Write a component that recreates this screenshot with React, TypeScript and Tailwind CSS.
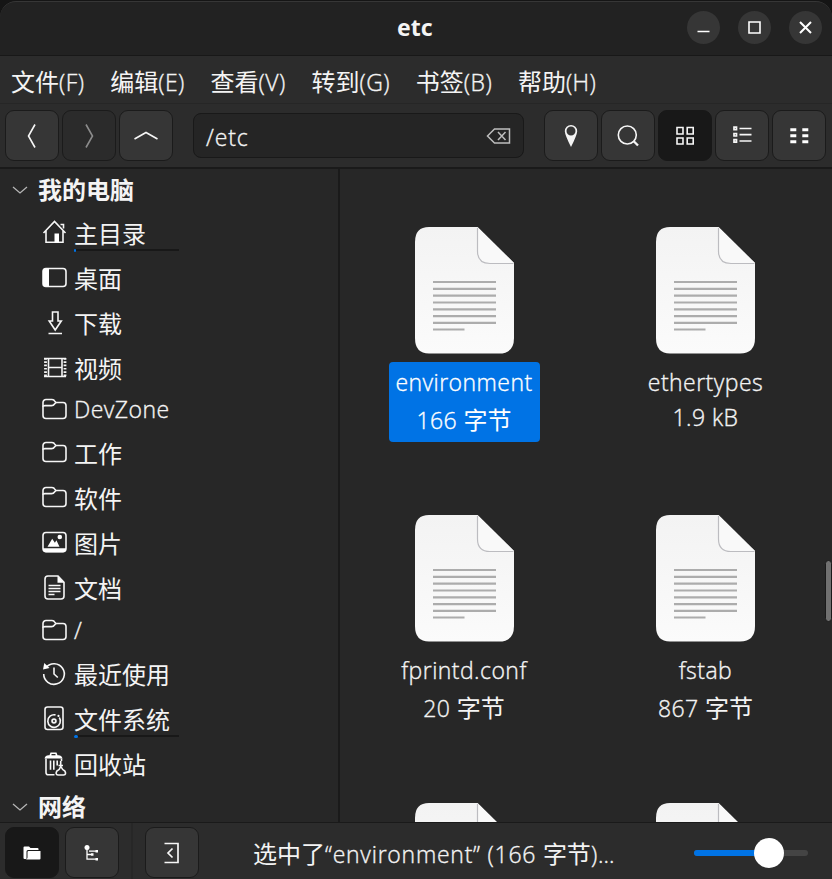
import React from "react";

/* Latin runs are set slightly smaller and lighter than the Chinese runs beside them. */
function Label({
  text,
  className = "",
  latin = "tracking-[0.45px]",
}: {
  text: string;
  className?: string;
  latin?: string;
}) {
  const parts = text.split(/([\u4e00-\u9fff]+)/).filter(Boolean);
  return (
    <span className={`whitespace-pre text-[23px] ${className}`}>
      {parts.map((p, i) =>
        /[\u4e00-\u9fff]/.test(p) ? (
          <span key={i} className="text-[24px]">
            {p}
          </span>
        ) : (
          <span
            key={i}
            className={`font-['Open_Sans','Noto_Sans',sans-serif] font-light [-webkit-text-stroke:0.35px_currentColor] ${latin}`}
          >
            {p}
          </span>
        )
      )}
    </span>
  );
}

const stroke = { fill: "none", stroke: "#f6f6f6", strokeWidth: 1.6 } as const;

function Svg({ w = 26, h = 26, children }: { w?: number; h?: number; children: React.ReactNode }) {
  return (
    <svg width={w} height={h} viewBox={`0 0 ${w} ${h}`} className="block shrink-0">
      {children}
    </svg>
  );
}

const HomeIcon = () => (
  <Svg>
    <g {...stroke}>
      <path d="M1.500 13 12.500 1.500l11 11.500M4 10.500v11.700h17V10.500" />
      <path d="M18.500 4.500h3v4" />
    </g>
    <path d="M12.500 13.500h4.500v9h-4.500z" fill="#fff" />
  </Svg>
);
const DesktopIcon = () => (
  <Svg>
    <rect x="1" y="3.500" width="23" height="18" rx="3" {...stroke} />
    <path d="M3.500 3.500H7v18H3.500A2.500 2.500 0 0 1 1 19V6a2.500 2.500 0 0 1 2.500-2.500z" fill="#fff" />
  </Svg>
);
const DownloadIcon = () => (
  <Svg>
    <path d="M10.500 2h5.500v9h3.300L13.200 20 7.200 11h3.300zM6.500 23.500H20" {...stroke} />
  </Svg>
);
const VideoIcon = () => (
  <Svg>
    <g {...stroke}>
      <path d="M2 3.500h22M2 21.500h22M6.500 3v19M20 3v19M6.500 12.500H20" />
      <path d="M3.500 3v19M23 3v19" strokeWidth="2.800" strokeDasharray="1.700 1.600" />
    </g>
  </Svg>
);
const FolderIcon = () => (
  <Svg>
    <g {...stroke}>
      <path d="M1 5.500a3 3 0 0 1 3-3h6q2 0 3 2l1 1h7a3 3 0 0 1 3 3v10a3 3 0 0 1-3 3H4a3 3 0 0 1-3-3z" />
      <path d="M1 9.800q0-1.200 2-1.200h6.500q2 0 3-1.600L14 5.500" />
    </g>
  </Svg>
);
const PictureIcon = () => (
  <Svg>
    <rect x="1" y="2.500" width="23" height="19" rx="3" {...stroke} />
    <path d="M1 18.200h23v1.200a3 3 0 0 1-3 3H4a3 3 0 0 1-3-3z" fill="#fff" />
    <path d="m5.500 16.700 4.700-8 2.700 4 1.500-2.500 3.100 6.500z" fill="#fff" />
    <circle cx="17.800" cy="7" r="2.300" fill="#fff" />
  </Svg>
);
const DocumentIcon = () => (
  <Svg>
    <path d="M6 1h10l6 6.200v13.800a3 3 0 0 1-3 3H6a3 3 0 0 1-3-3V4a3 3 0 0 1 3-3z" {...stroke} />
    <path d="M15.500 1v6.800h6.700z" fill="#fff" />
    <path d="M6.500 10.500h12M6.500 13.500h12M6.500 16.500h12M6.500 19.500h6" {...stroke} strokeWidth={1.500} />
  </Svg>
);
const RecentIcon = () => (
  <Svg>
    <path d="M4 6.500A10.300 10.300 0 1 1 1.700 13M12 6.500V13l3.800 3.500" {...stroke} />
    <path d="m1 8.500 1.300-6.500L7.500 7z" fill="#fff" />
  </Svg>
);
const DiskIcon = () => (
  <Svg>
    <g {...stroke}>
      <rect x="3" y="1" width="18" height="22.500" rx="2.500" />
      <path d="M13.500 8.900A6.300 6.300 0 1 0 17.300 11.500" />
      <circle cx="12" cy="15" r="1.900" strokeWidth="1.800" />
    </g>
    <circle cx="16.500" cy="9.900" r="1.100" fill="#fff" />
  </Svg>
);
const TrashIcon = () => (
  <Svg>
    <path d="M2.500 7.500q1-3.300 4-3.300h1l1-2.700h6l1 2.700h1q3 0 4 3.300z" fill="#fff" />
    <path d="M9.500 3h4v1.300h-4z" fill="#272727" />
    <g {...stroke}>
      <path d="M4 7.500v14a2.300 2.300 0 0 0 2.300 2.300h6.200M19.500 7.500v2.500M8.500 9.500v9.300M11.800 9.500v9.300M15.200 9.500v5M18.700 10v4" />
      <path d="M16.500 14.500h4.500M18.800 15.500q1.500 3.200 4 4.500 2 3.500-1.200 4h-5.500q-3.200-.5-1.200-4 2.800-1.300 3.900-4.500z" />
    </g>
  </Svg>
);

const places = [
  { name: "主目录", icon: HomeIcon, h: "h-[45px]", used: "w-[2px]" },
  { name: "桌面", icon: DesktopIcon, h: "h-[45px]" },
  { name: "下载", icon: DownloadIcon, h: "h-[45px]" },
  { name: "视频", icon: VideoIcon, h: "h-[45px]" },
  { name: "DevZone", icon: FolderIcon, h: "h-[40px]", latin: true },
  { name: "工作", icon: FolderIcon, h: "h-[45px]" },
  { name: "软件", icon: FolderIcon, h: "h-[45px]" },
  { name: "图片", icon: PictureIcon, h: "h-[45px]" },
  { name: "文档", icon: DocumentIcon, h: "h-[45px]" },
  { name: "/", icon: FolderIcon, h: "h-[41px]", latin: true },
  { name: "最近使用", icon: RecentIcon, h: "h-[45px]" },
  { name: "文件系统", icon: DiskIcon, h: "h-[45px]", used: "w-[4px]" },
  { name: "回收站", icon: TrashIcon, h: "h-[45px]" },
];

function SectionHeader({ name, h }: { name: string; h: string }) {
  return (
    <div className={`flex shrink-0 items-center pl-[12px] ${h}`}>
      <Svg w={16} h={10}>
        <path d="m1 2 7 6 7-6" fill="none" stroke="#b5b5b5" strokeWidth="1.300" />
      </Svg>
      <Label text={name} className="ml-[10px] font-bold leading-[36px]" />
    </div>
  );
}

function FileSheet() {
  return (
    <svg width="101" height="127" viewBox="0 0 101 127" className="block shrink-0">
      <defs>
        <linearGradient id="sheet" x1="0" y1="0" x2="0" y2="1">
          <stop offset="0" stopColor="#f3f3f3" />
          <stop offset="1" stopColor="#fbfbfb" />
        </linearGradient>
      </defs>
      <path d="M15 0h48.500L100 36v75q0 15.500-15 15.500H15Q1 126.500 1 111V15Q1 0 15 0z" fill="url(#sheet)" />
      <path d="M63.500 0 100 36H76Q63.500 36 63.500 23z" fill="#f9f9f9" />
      <path d="M63.500 1v23q0 12.500 12.500 12.500h23.500" fill="none" stroke="#bcbcc0" strokeWidth="1.200" />
      <path
        d="M19 55h63M19 61.900h63M19 68.700h63M19 75.500h63M19 82.300h63M19 89.100h63M19 95.900h63M19 102.500h31.500"
        stroke="#acacac"
        strokeWidth="2.200"
      />
    </svg>
  );
}

const files = [
  { name: "environment", size: "166 字节", selected: true },
  { name: "ethertypes", size: "1.9 kB" },
  { name: "fprintd.conf", size: "20 字节" },
  { name: "fstab", size: "867 字节" },
  { name: "", size: "" },
  { name: "", size: "" },
];

function ToolButton({ tone = "normal", children }: { tone?: "normal" | "active" | "disabled"; children: React.ReactNode }) {
  const tones = {
    normal: "bg-[#363636] border-[#1b1b1b]",
    active: "bg-[#181818] border-[#181818]",
    disabled: "bg-[#2b2b2b] border-[#1b1b1b]",
  };
  return (
    <button className={`flex h-[51px] w-[54px] shrink-0 items-center justify-center rounded-[9px] border pr-px ${tones[tone]}`}>
      {children}
    </button>
  );
}

function Round({ children }: { children: React.ReactNode }) {
  return (
    <button className="flex h-[33px] w-[33px] items-center justify-center rounded-full bg-[#363636]">
      <svg width="33" height="33" viewBox="0 0 33 33" fill="none" stroke="#fff" strokeWidth="1.600">
        {children}
      </svg>
    </button>
  );
}

export default function App() {
  return (
    <div className="h-[879px] w-[832px] overflow-hidden bg-[#151515] pt-px font-['Noto_Sans','Noto_Sans_CJK_SC',sans-serif] text-[#f4f4f4]">
      <div className="flex h-full flex-col overflow-hidden rounded-t-[16px] bg-[#272727]">
        <header className="flex h-[55px] shrink-0 items-center rounded-t-[16px] border-b border-t border-b-[#181818] border-t-[#363636] bg-[#222222]">
          <div className="w-[143px]" />
          <div className="flex-1 pb-[4px] text-center text-[23px] font-bold leading-[32px]">etc</div>
          <div className="flex w-[145.500px] gap-[18px] pb-[2px]">
            <Round>
              <path d="M10.500 20.500h12" />
            </Round>
            <Round>
              <path d="M11 11h11v11H11z" />
            </Round>
            <Round>
              <path d="m11 11 11 11M22 11 11 22" strokeWidth="2" />
            </Round>
          </div>
        </header>

        <nav className="flex h-[48px] shrink-0 items-center gap-[25.800px] border-b border-[#262626] bg-[#2c2c2c] pl-[11px] pt-[4px]">
          {["文件(F)", "编辑(E)", "查看(V)", "转到(G)", "书签(B)", "帮助(H)"].map((m) => (
            <Label key={m} text={m} className="leading-[36px]" />
          ))}
        </nav>

        <div className="flex h-[65px] shrink-0 items-center gap-[3px] border-b-2 border-[#1a1a1a] bg-[#2c2c2c] pl-[5px]">
          <ToolButton>
            <Svg w={12} h={26}>
              <path d="M9 1.500 2.500 13 9 24.500" {...stroke} />
            </Svg>
          </ToolButton>
          <ToolButton tone="disabled">
            <Svg w={12} h={26}>
              <path d="M3 1.500 9.500 13 3 24.500" {...stroke} stroke="#8b8b8b" />
            </Svg>
          </ToolButton>
          <ToolButton>
            <Svg w={26} h={12}>
              <path d="M1.500 9 13 2.500 24.500 9" {...stroke} />
            </Svg>
          </ToolButton>
          <div className="mx-[17px] flex h-[45px] w-[331px] shrink-0 items-center justify-between rounded-[8px] border border-[#191919] bg-[#252525] pl-[12px] pr-[11px]">
            <Label text="/etc" className="pt-[3px] leading-[32px]" latin="tracking-[0.9px]" />
            <Svg w={26} h={18}>
              <path d="M8.500 2h15v14h-15L1.500 9zM12 5l7.500 8M19.500 5 12 13" fill="none" stroke="#bdbdbd" strokeWidth="1.500" />
            </Svg>
          </div>
          <ToolButton>
            <Svg w={16} h={26}>
              <path fillRule="evenodd" fill="#f4f4f4" d="M8 2a6.200 6.200 0 0 1 6.200 6.200Q14 12 8 24 2 12 1.800 8.200A6.200 6.200 0 0 1 8 2zm0 1.500A4.500 4.500 0 1 0 8 12.500 4.500 4.500 0 0 0 8 3.500z" />
            </Svg>
          </ToolButton>
          <ToolButton>
            <Svg>
              <circle cx="12.300" cy="12" r="9" {...stroke} />
              <path d="m18.500 18 4.500 4.500" stroke="#f4f4f4" strokeWidth="2.300" />
            </Svg>
          </ToolButton>
          <ToolButton tone="active">
            <Svg>
              <path d="M5 4.500h6v6.500H5zM15.200 4.500h6v6.500h-6zM5 15h6v6H5zM15.200 15h6v6h-6z" {...stroke} />
            </Svg>
          </ToolButton>
          <ToolButton>
            <Svg>
              <path d="M5 4.200h2.500v2.500H5zM5 10.500h2.500V13H5zM5 16.700h2.500v2.500H5zM10.500 5.500h12M10.500 11.700h12M10.500 18h12" {...stroke} strokeWidth={1.700} />
            </Svg>
          </ToolButton>
          <ToolButton>
            <Svg>
              <path d="M4.300 6.800h6M16.300 6.800h6M4.300 12.800h6M16.300 12.800h6M4.300 18.800h6M16.300 18.800h6" stroke="#fff" strokeWidth="2.900" />
            </Svg>
          </ToolButton>
        </div>

        <div className="flex h-[653px] shrink-0 overflow-hidden">
          <aside className="flex w-[340px] shrink-0 flex-col overflow-hidden border-r-2 border-[#1a1a1a]">
            <SectionHeader name="我的电脑" h="h-[41px]" />
            {places.map((p) => (
              <div key={p.name} className={`relative flex shrink-0 items-center pl-[42px] ${p.h}`}>
                <p.icon />
                <Label text={p.name} className={`ml-[6px] leading-[36px] ${p.latin ? "pb-[2px]" : "pt-[2px]"}`} />
                {p.used && (
                  <div className="absolute bottom-[4px] left-[74px] h-[2px] w-[105px] bg-[#181818]">
                    <div className={`h-[3px] rounded-full bg-[#0073e5] ${p.used}`} />
                  </div>
                )}
              </div>
            ))}
            <SectionHeader name="网络" h="h-[42px]" />
          </aside>

          <main className="relative flex-1 overflow-hidden pl-[3px] pt-[58px]">
            <div className="grid grid-cols-[242px_241px]">
              {files.map((f, i) => (
                <div key={i} className="flex h-[288px] flex-col items-center">
                  <FileSheet />
                  {f.name && (
                    <div
                      className={`mt-[8px] flex h-[80px] flex-col items-center rounded-[4px] px-[6px] pt-[2px] ${
                        f.selected ? "w-[151px] bg-[#0073e5] text-white" : ""
                      }`}
                    >
                      <Label text={f.name} className="leading-[36px]" />
                      <Label text={f.size} className={f.size.includes("kB") ? "leading-[34px]" : "leading-[40px]"} />
                    </div>
                  )}
                </div>
              ))}
            </div>
            <div className="absolute right-0 top-[391px] h-[62px] w-[7px] rounded-full border border-[#1a1a1a] bg-[#707070]" />
          </main>
        </div>

        <footer className="flex h-[57px] shrink-0 items-start border-t border-[#1a1a1a] bg-[#2c2c2c] pl-[5px] pt-[4px]">
          <ToolButton tone="active">
            <Svg w={20} h={18}>
              <path d="M1.500 3.500q0-1 1-1H7L8.500 4h7q1 0 1 1v1H6q-1.500 0-1.500 1.500V15h-2q-1 0-1-1z" fill="#fff" />
              <path d="M5.500 8q0-1 1-1h12v7.500q0 1-1 1h-14q2 0 2-2z" fill="#fff" />
            </Svg>
          </ToolButton>
          <div className="w-[6px]" />
          <ToolButton>
            <Svg w={18} h={18}>
              <circle cx="4" cy="3.500" r="2.500" fill="#fff" />
              <path d="M4 4v11.200h9M4 10.500h4M6 7.200h7" fill="none" stroke="#fff" strokeWidth="1.300" />
              <path d="M12.500 6h2.500v2.500h-2.500zM8 9.300h2.500v2.500H8zM12.500 13.900h2.500v2.500h-2.500z" fill="#fff" />
            </Svg>
          </ToolButton>
          <div className="ml-[12px] mr-[12px] mt-[-4px] h-[56px] w-[2px] bg-[#272727]" />
          <ToolButton>
            <Svg w={18} h={22}>
              <path d="M1.500 1.500H15v19H1.500M9.500 6.500 5 11l4.500 4.500" {...stroke} strokeWidth={1.700} />
            </Svg>
          </ToolButton>
          <Label
            text={"选中了“environment” (166 字节)…"}
            className="ml-[54px] mt-[8px] w-[441px] shrink-0 leading-[38px]"
            latin="tracking-[0.75px]"
          />
          <div className="relative mt-[23px] h-[6px] w-[114px] shrink-0 rounded-full bg-[#444444]">
            <div className="h-full w-[75px] rounded-full bg-[#0073e5]" />
            <div className="absolute left-[60px] top-[-12px] h-[30px] w-[30px] rounded-full bg-white" />
          </div>
        </footer>
      </div>
    </div>
  );
}
